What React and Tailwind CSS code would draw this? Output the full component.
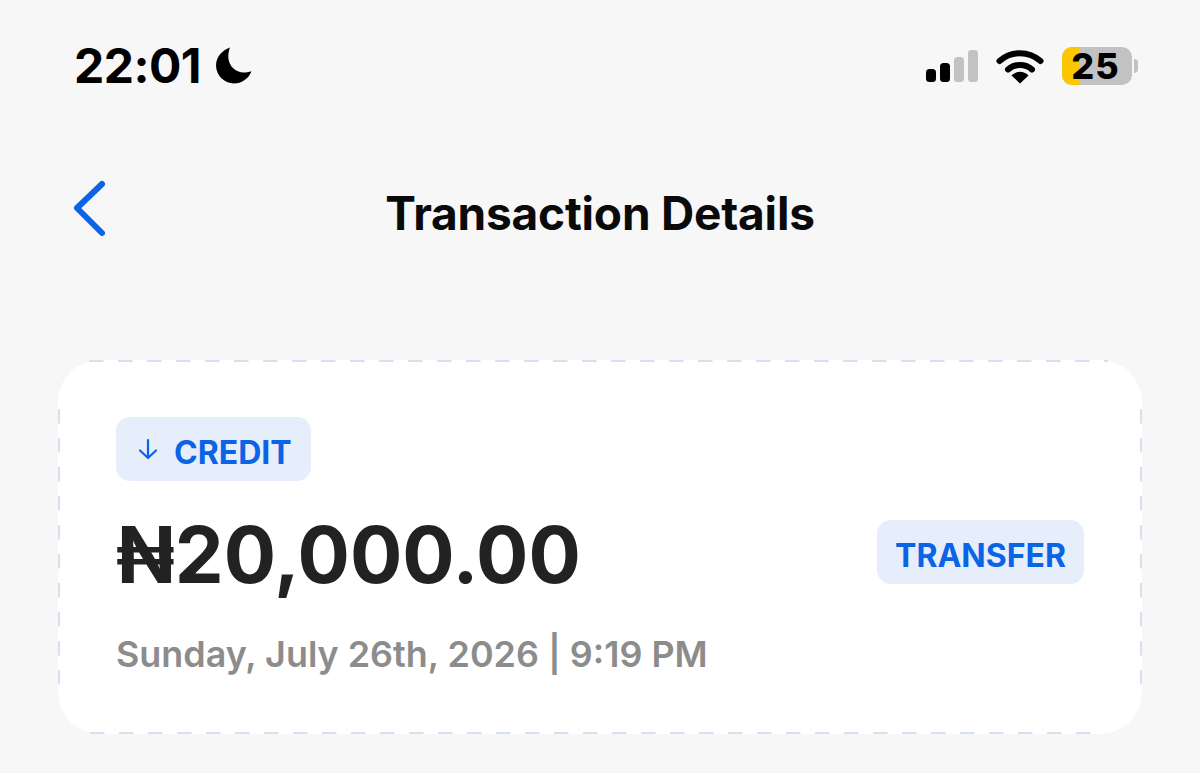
export default function App() {
  return (
    <div className="h-[773px] w-[1200px] overflow-hidden bg-[#f7f7f8] font-['Inter',sans-serif]">
      {/* status bar */}
      <div className="flex h-[88px] items-center justify-between pl-[74px] pr-[62px] pt-[44px]">
        <div className="flex items-center gap-[14px]">
          <span className="text-[48px] leading-[44px] font-bold tracking-[-0.5px] text-black">22:01</span>
          <svg width="37" height="37" viewBox="0 0 36 36" className="-mt-[1px]">
            <path d="M14.500 0.500C11.500 9 13 16 17.500 20.500C22 25 28 26 35.500 23.500C33 30.500 26 35.500 18.500 35.500C9 35.500 1 27.500 1 18C1 10 7 3 14.500 0.500Z" fill="#000" />
          </svg>
        </div>
        <div className="flex items-center">
          <svg width="54" height="34" viewBox="0 0 54 34">
            <rect x="1" y="20" width="10" height="13" rx="3.500" fill="#000" />
            <rect x="15" y="14" width="10" height="19" rx="3.500" fill="#000" />
            <rect x="29" y="8" width="10" height="25" rx="3.500" fill="#c2c2c2" />
            <rect x="43" y="1" width="10" height="32" rx="3.500" fill="#c2c2c2" />
          </svg>
          <svg width="48" height="36" viewBox="0 0 48 36" className="ml-[17px]">
            <path d="M3.500 13C15 2.500 33 2.500 44.500 13" fill="none" stroke="#000" strokeWidth="6" strokeLinecap="round" />
            <path d="M12 21.500C18.500 15.500 29.500 15.500 36 21.500" fill="none" stroke="#000" strokeWidth="6" strokeLinecap="round" />
            <path d="M15.500 27.500C20.500 22.500 27.500 22.500 32.500 27.500L24 35.500Z" fill="#000" />
          </svg>
          <div className="relative ml-[18px] h-[38px] w-[70px] rounded-[10px] bg-[#c2c2c2]">
            <div className="h-full w-[18px] rounded-l-[10px] bg-[#fdc700]" />
            <span className="absolute inset-0 flex items-center justify-center pr-[3px] text-[36px] leading-none font-extrabold tracking-[1px] text-black">25</span>
          </div>
          <div className="ml-[2px] h-[14px] w-[4px] rounded-r-[4px] bg-[#c2c2c2]" />
        </div>
      </div>

      {/* nav */}
      <div className="mt-[85px] grid h-[80px] grid-cols-[1fr_auto_1fr] items-center pl-[70px]">
        <svg width="40" height="80" viewBox="0 0 40 80">
          <path d="M32 11L7 35L32 60" fill="none" stroke="#0b63e5" strokeWidth="6" strokeLinecap="round" strokeLinejoin="round" />
        </svg>
        <h1 className="-ml-[70px] text-[46px] leading-[56px] font-bold tracking-[-0.2px] text-[#0a0a0a]">Transaction Details</h1>
        <div />
      </div>

      {/* card */}
      <div className="relative mx-[58px] mt-[107px] flex h-[374px] flex-col rounded-[42px] bg-white pl-[58px] pr-[58px] pt-[57px]">
        <svg className="absolute inset-0 h-full w-full" viewBox="0 0 1084 374" fill="none" stroke="#d6e0f5" strokeWidth="2" strokeDasharray="14.500 14.500">
          <line x1="31" y1="1" x2="1050" y2="1" />
          <line x1="32" y1="373" x2="1040" y2="373" />
          <line x1="1" y1="49" x2="1" y2="330" />
          <line x1="1083" y1="49" x2="1083" y2="330" />
        </svg>
        <div className="relative flex h-[64px] w-[195px] items-center rounded-[14px] bg-[#e6eefc] pl-[20px] text-[#0b63e5]">
          <svg width="24" height="24" viewBox="0 0 24 24" fill="none" stroke="currentColor" strokeWidth="2.200" strokeLinecap="round" strokeLinejoin="round">
            <path d="M12 3V21M4 13.500L12 21L20 13.500" />
          </svg>
          <span className="ml-[14px] pt-[7px] text-[32px] leading-none font-bold">CREDIT</span>
        </div>
        <div className="relative mt-[38px] flex items-center justify-between">
          <span className="text-[77.700px] leading-[72px] font-bold text-[#222222]">₦20,000.00</span>
          <div className="mb-[6px] flex h-[64px] w-[207px] items-center justify-center rounded-[14px] bg-[#e6eefc] pt-[7px] text-[32px] leading-none font-bold text-[#0b63e5]">TRANSFER</div>
        </div>
        <div className="relative mt-[41px] text-[35.900px] leading-[44px] font-semibold text-[#8c8c8c]">Sunday, July 26th, 2026 | 9:19 PM</div>
      </div>
    </div>
  );
}
